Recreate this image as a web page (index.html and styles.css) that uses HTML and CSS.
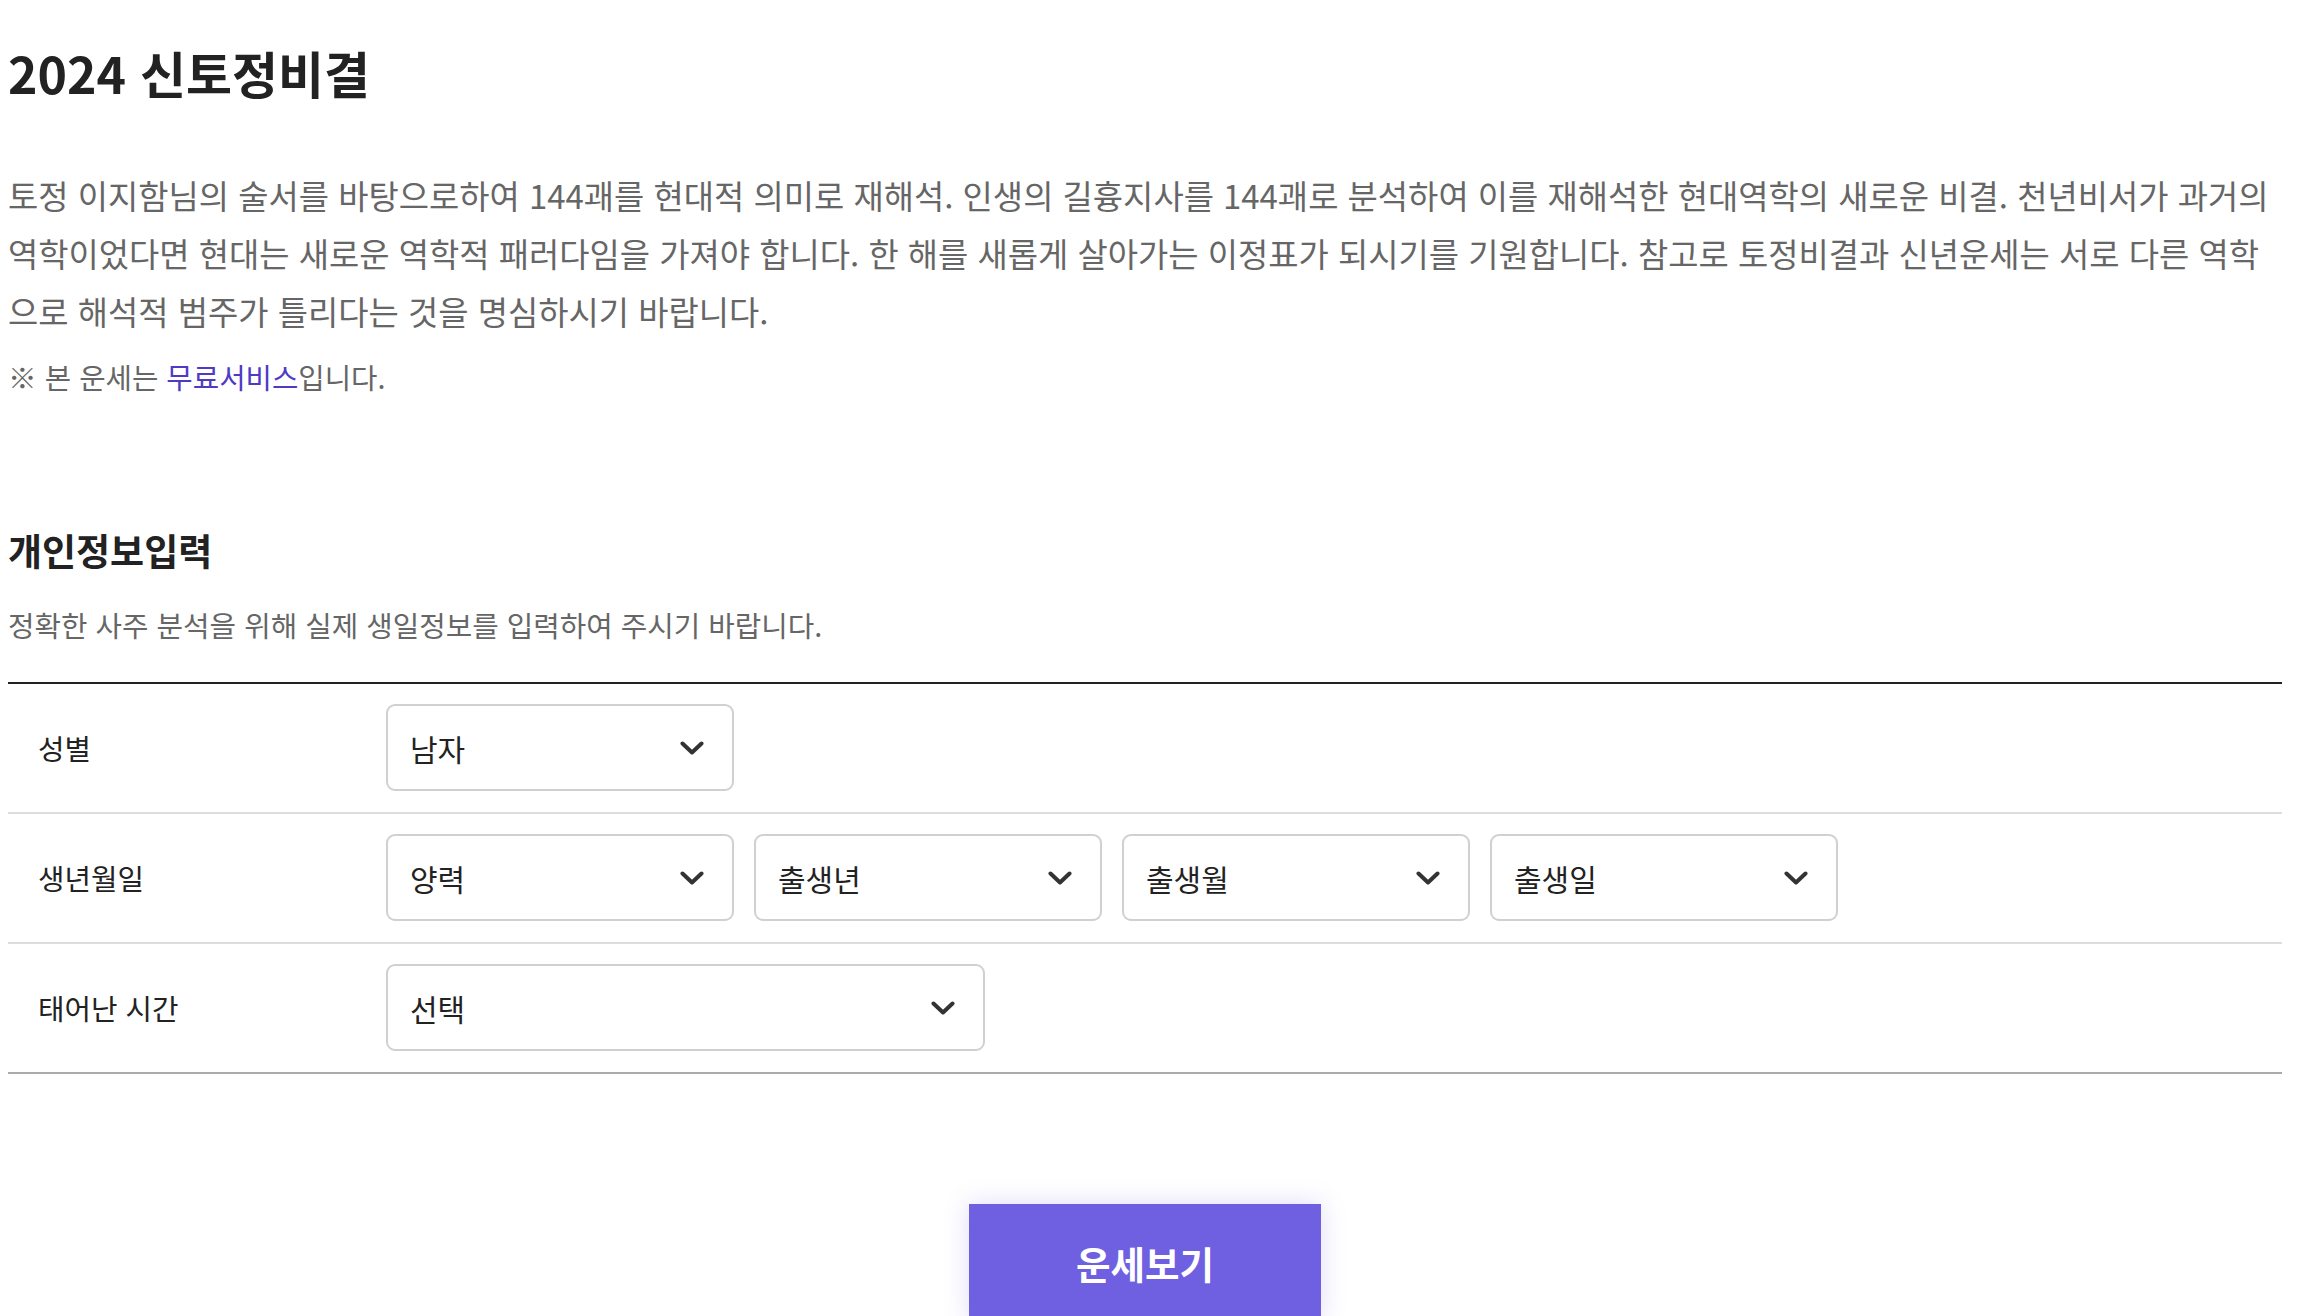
FILE: index.html
```html
<!doctype html>
<html lang="ko">
	<head>
		<meta charset="utf-8">
		<title>2024 신토정비결</title>
		<link rel="stylesheet" href="styles.css">
	</head>
	<body>
		<div id="wrap">
			<h1 class="page-title">2024 신토정비결</h1>
			<p class="intro">토정 이지함님의 술서를 바탕으로하여 144괘를 현대적 의미로 재해석. 인생의 길흉지사를 144괘로 분석하여 이를 재해석한 현대역학의 새로운 비결. 천년비서가 과거의 역학이었다면 현대는 새로운 역학적 패러다임을 가져야 합니다. 한 해를 새롭게 살아가는 이정표가 되시기를 기원합니다. 참고로 토정비결과 신년운세는 서로 다른 역학으로 해석적 범주가 틀리다는 것을 명심하시기 바랍니다.</p>
			<p class="notice">※ 본 운세는 <a href="#">무료서비스</a>입니다.</p>

			<h2 class="sec-title">개인정보입력</h2>
			<p class="sec-desc">정확한 사주 분석을 위해 실제 생일정보를 입력하여 주시기 바랍니다.</p>

			<form class="info-form" onsubmit="return false;">
				<div class="form-table">
					<div class="form-row">
						<div class="form-label">성별</div>
						<div class="form-field">
							<div class="select-box">
								<select name="gender">
									<option>남자</option>
									<option>여자</option>
								</select>
								<svg class="arrow" width="24" height="14" viewBox="0 0 24 14"><path d="M2.5 2.5l9.5 9L21.5 2.5" fill="none" stroke="#333" stroke-width="4" stroke-linecap="round" stroke-linejoin="round"/></svg>
							</div>
						</div>
					</div>
					<div class="form-row">
						<div class="form-label">생년월일</div>
						<div class="form-field">
							<div class="select-box">
								<select name="calendar">
									<option>양력</option>
									<option>음력</option>
								</select>
								<svg class="arrow" width="24" height="14" viewBox="0 0 24 14"><path d="M2.5 2.5l9.5 9L21.5 2.5" fill="none" stroke="#333" stroke-width="4" stroke-linecap="round" stroke-linejoin="round"/></svg>
							</div>
							<div class="select-box">
								<select name="year">
									<option>출생년</option>
								</select>
								<svg class="arrow" width="24" height="14" viewBox="0 0 24 14"><path d="M2.5 2.5l9.5 9L21.5 2.5" fill="none" stroke="#333" stroke-width="4" stroke-linecap="round" stroke-linejoin="round"/></svg>
							</div>
							<div class="select-box">
								<select name="month">
									<option>출생월</option>
								</select>
								<svg class="arrow" width="24" height="14" viewBox="0 0 24 14"><path d="M2.5 2.5l9.5 9L21.5 2.5" fill="none" stroke="#333" stroke-width="4" stroke-linecap="round" stroke-linejoin="round"/></svg>
							</div>
							<div class="select-box">
								<select name="day">
									<option>출생일</option>
								</select>
								<svg class="arrow" width="24" height="14" viewBox="0 0 24 14"><path d="M2.5 2.5l9.5 9L21.5 2.5" fill="none" stroke="#333" stroke-width="4" stroke-linecap="round" stroke-linejoin="round"/></svg>
							</div>
						</div>
					</div>
					<div class="form-row">
						<div class="form-label">태어난 시간</div>
						<div class="form-field">
							<div class="select-box wide">
								<select name="time">
									<option>선택</option>
								</select>
								<svg class="arrow" width="24" height="14" viewBox="0 0 24 14"><path d="M2.5 2.5l9.5 9L21.5 2.5" fill="none" stroke="#333" stroke-width="4" stroke-linecap="round" stroke-linejoin="round"/></svg>
							</div>
						</div>
					</div>
				</div>
				<div class="btn-area">
					<button type="submit" class="btn-submit">운세보기</button>
				</div>
			</form>
		</div>
	</body>
</html>
```

FILE: styles.css
```css
* {
	margin: 0;
	padding: 0;
	box-sizing: border-box;
}
html, body {
	overflow: hidden;
}
body {
	margin: 8px;
	background: #fff;
	color: #222;
	font-family: "Noto Sans CJK KR", "Noto Sans", sans-serif;
}
#wrap {
	margin-right: 22px;
}
.page-title {
	margin-top: 34px;
	font-size: 50px;
	line-height: 60px;
	font-weight: 700;
	color: #222;
}
.intro {
	margin-top: 64px;
	font-size: 32.9px;
	line-height: 58px;
	color: #666;
}
.notice {
	margin-top: 17px;
	font-size: 28.7px;
	line-height: 40px;
	color: #666;
}
.notice a {
	color: #4f3ac6;
	text-decoration: none;
}
.sec-title {
	margin-top: 131px;
	font-size: 37px;
	line-height: 44px;
	font-weight: 700;
	color: #222;
}
.sec-desc {
	margin-top: 33px;
	font-size: 28.8px;
	line-height: 40px;
	color: #666;
}
.form-table {
	margin-top: 37px;
	border-top: 2px solid #222;
	border-bottom: 2px solid #aaa;
}
.form-row {
	display: flex;
	align-items: center;
	padding: 20px 0 21px;
}
.form-row + .form-row {
	border-top: 2px solid #ddd;
}
.form-label {
	width: 378px;
	padding-left: 30px;
	font-size: 28.8px;
	color: #222;
}
.form-field {
	display: flex;
	gap: 20px;
}
.select-box {
	position: relative;
	width: 348px;
	height: 87px;
}
.select-box.wide {
	width: 599px;
}
.select-box select {
	-webkit-appearance: none;
	appearance: none;
	width: 100%;
	height: 100%;
	padding: 0 60px 0 22px;
	border: 2px solid #d0d0d0;
	border-radius: 9px;
	background: #fff;
	font-family: "Noto Sans CJK KR", "Noto Sans", sans-serif;
	font-size: 30px;
	color: #222;
	outline: none;
}
.select-box .arrow {
	position: absolute;
	right: 30px;
	top: 37px;
	pointer-events: none;
}
.btn-area {
	display: flex;
	justify-content: center;
	margin-top: 130px;
}
.btn-submit {
	width: 352px;
	height: 116px;
	border: none;
	background: #6f5fe1;
	color: #fff;
	font-family: "Noto Sans CJK KR", "Noto Sans", sans-serif;
	font-size: 37.5px;
	font-weight: 700;
	box-shadow: 0 0 24px rgba(111, 95, 225, 0.22);
	cursor: pointer;
}
```
